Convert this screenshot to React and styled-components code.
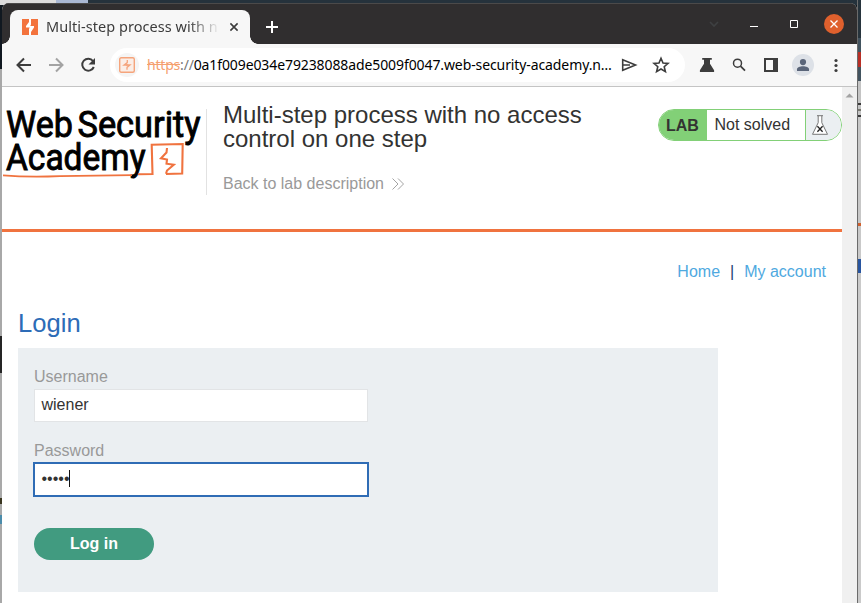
import React from "react";
import styled, { createGlobalStyle, css } from "styled-components";

const Global = createGlobalStyle`
  * { box-sizing: border-box; }
  html, body { margin: 0; padding: 0; overflow: hidden; }
  body { font-family: "Liberation Sans", Arial, sans-serif; font-size: 16px; color: #333332; }
`;

const Desktop = styled.div`
  width: 861px;
  height: 603px;
  padding: 3px 0 0 2px;
  display: grid;
  grid-template-columns: 855px 4px;
  background: linear-gradient(90deg, #dcdcdc 0 56px, #a9b8d4 56px 88px, #25323c 88px) 0 0 / 100% 5px no-repeat,
    linear-gradient(#101820 0 69px, #a8a8a8 69px 336px, #252525 336px 373px, #a9a9a9 373px 498px, #39351f 498px 504px, #aaa 504px 515px, #4b8cab 515px 524px, #a8a8a8 524px);
`;

const RightStrip = styled.div`
  margin-top: -3px;
  border-left: 1px solid #6b6b6b;
  background: linear-gradient(#27343d 0 38px, #42535f 38px 52px, #b92f26 52px 67px, #42535f 67px 81px, #c4c4c4 81px 103px, #383838 103px 105px, #c4c4c4 105px 109px, #77776f 109px 111px, #c4c4c4 111px 115px, #383838 115px 117px, #c7c7c7 117px 223px, #d0602e 223px 226px, #c9c9c9 226px 259px, #2855a0 259px 273px, #cacaca 273px);
`;

const Window = styled.div`
  height: 600px;
  display: grid;
  grid-template-rows: 41px 43px 516px;
  border-radius: 7px 7px 0 0;
  overflow: hidden;
  background: #fff;
`;

const TitleBar = styled.div`
  display: flex;
  padding: 7px 3px 0 8px;
  background: #302e2f;
  box-shadow: inset 0 1px #4b4a4a;
`;

const Tab = styled.div`
  position: relative;
  width: 240px;
  height: 34px;
  display: flex;
  align-items: center;
  padding: 0 11px 0 12px;
  border-radius: 8px 8px 0 0;
  background: #f7f7f7;
  &::before, &::after {
    content: "";
    position: absolute;
    bottom: 0;
    width: 8px;
    height: 8px;
  }
  &::before { left: -8px; background: radial-gradient(circle at 0 0, #302e2f 7.5px, #f7f7f7 8px); }
  &::after { right: -8px; background: radial-gradient(circle at 100% 0, #302e2f 7.5px, #f7f7f7 8px); }
`;

const TabTitle = styled.div`
  width: 171px;
  margin: -2px auto 0 8px;
  overflow: hidden;
  white-space: nowrap;
  font: 14.5px/22px "Noto Sans", sans-serif;
  letter-spacing: 0.04px;
  color: #3c3c3c;
  mask-image: linear-gradient(90deg, #000 142px, transparent 174px);
`;

const NewTab = styled.div`
  width: 44px;
  display: flex;
  align-items: center;
  justify-content: center;
`;

const WindowControls = styled.div`
  margin-left: auto;
  height: 28px;
  display: grid;
  grid-template-columns: repeat(4, 40px);
  align-items: center;
  justify-items: center;
  & > svg { display: block; }
`;

const CloseButton = styled.div`
  width: 20px;
  height: 20px;
  display: grid;
  place-items: center;
  border-radius: 50%;
  background: #df602d;
`;

const Toolbar = styled.div`
  display: flex;
  align-items: center;
  padding: 0 11px 1px 12px;
  border-bottom: 1px solid #c4c4c4;
  background: #f7f7f7;
`;

const NavButtons = styled.div`
  display: flex;
  width: 96px;
  gap: 12px;
`;

const AddressBar = styled.div`
  width: 575px;
  height: 34px;
  display: flex;
  align-items: center;
  padding: 0 14px 0 5px;
  border-radius: 17px;
  background: #fff;
`;

const SiteBadge = styled.div`
  width: 24px;
  height: 24px;
  display: grid;
  place-items: center;
  border-radius: 50%;
  background: #f5f5f5;
`;

const Url = styled.div`
  width: 467px;
  margin-left: 8px;
  white-space: nowrap;
  font: 14px/22px "Noto Sans", sans-serif;
  letter-spacing: -0.2px;
  color: #000;
`;

const Scheme = styled.span`
  color: #f5a06f;
  text-decoration: line-through;
`;

const Slashes = styled.span`
  color: #777;
`;

const Host = styled.span`
  letter-spacing: -0.1px;
`;

const AddressActions = styled.div`
  display: flex;
  margin-left: auto;
  gap: 12px;
`;

const Extensions = styled.div`
  margin-left: auto;
  display: flex;
  align-items: center;
  gap: 12px;
  & > svg { display: block; }
  & > svg:nth-child(4) { margin-left: -1px; }
`;

const Viewport = styled.div`
  display: grid;
  grid-template-columns: 840px 15px;
`;

const Scrollbar = styled.div`
  padding: 6px 3px;
  background: #f0f0f0;
  & > svg { display: block; }
`;

const Page = styled.div`
  min-width: 0;
`;

const LabHeader = styled.header`
  height: 145px;
  display: flex;
  align-items: flex-start;
  border-bottom: 3px solid #f0733f;
`;

const LogoCell = styled.div`
  width: 205px;
  height: 86px;
  margin-top: 22px;
  border-right: 1px solid #e2e2e2;
  & > svg { display: block; overflow: visible; }
`;

const Heading = styled.div`
  width: 400px;
  padding: 16px 0 0 16px;
`;

const LabTitle = styled.h1`
  margin: 0;
  font-size: 24px;
  font-weight: 400;
  line-height: 24px;
`;

const BackLink = styled.a`
  display: flex;
  align-items: center;
  gap: 8px;
  margin-top: 23px;
  line-height: 20px;
  color: #999;
  & > svg { margin-top: -1px; }
`;

const LabStatus = styled.div`
  width: 184px;
  height: 32px;
  display: grid;
  grid-template-columns: 48px 99px 1fr;
  align-items: stretch;
  margin: 22px 0 0 auto;
  border: 1px solid #82d077;
  border-radius: 16px;
  overflow: hidden;
  line-height: 30px;
`;

const LabTag = styled.div`
  padding: 1px 0 0 7px;
  background: #82d077;
  font-weight: 700;
`;

const LabState = styled.div`
  padding-left: 7.5px;
  border-right: 1px solid #82d077;
`;

const FlaskCell = styled.div`
  padding: 5px 0 0 5px;
  background: #ebeff2;
  & > svg { display: block; }
`;

const Links = styled.nav`
  display: flex;
  justify-content: flex-end;
  gap: 10px;
  padding: 30px 16px 0 0;
  line-height: 20px;
  color: #1b3b6f;
`;

const Link = styled.a`
  color: #4fa9df;
`;

const Main = styled.main`
  padding: 26px 0 0 16px;
`;

const SectionTitle = styled.h2`
  margin: 0;
  height: 40px;
  font-size: 25.6px;
  line-height: 30px;
  font-weight: 400;
  color: #2d6cb7;
`;

const LoginForm = styled.div`
  width: 700px;
  height: 244px;
  padding: 19px 16px;
  background: #ebeff2;
`;

const Field = styled.div`
  height: ${(p) => (p.$last ? "87px" : "74px")};
`;

const Label = styled.label`
  display: block;
  height: 22px;
  line-height: 20px;
  color: #999;
`;

const Input = styled.div`
  width: 334px;
  height: 33px;
  display: flex;
  align-items: center;
  padding: 0 6.5px 2px;
  border: 1px solid #e2e4e6;
  background: #fff;
  ${(p) => p.$focused && css`
    border-color: #2f6cb5;
    box-shadow: 0 0 0 1px #2f6cb5;
  `}
`;

const Caret = styled.span`
  width: 1px;
  height: 17px;
  margin-left: -0.5px;
  background: #111;
`;

const SubmitButton = styled.button`
  display: block;
  width: 120px;
  height: 32px;
  padding: 0;
  border: 0;
  border-radius: 16px;
  background: #419b80;
  color: #fff;
  font: 700 16px/32px "Liberation Sans", Arial, sans-serif;
`;

const stroke = { fill: "none", stroke: "#3d3d3d", strokeWidth: 2 };

function AcademyLogo() {
  return (
    <svg width="203" height="74" viewBox="2 109 203 74">
      <g fill="#000" stroke="#000" strokeWidth="0.9" fontFamily="Roboto, sans-serif" fontSize="36.5" fontWeight="400">
        <text x="6" y="137.3" textLength="67" lengthAdjust="spacingAndGlyphs">Web</text>
        <text x="77.5" y="137.3" textLength="123" lengthAdjust="spacingAndGlyphs">Security</text>
        <text x="6" y="169.6" textLength="139.5" lengthAdjust="spacingAndGlyphs">Academy</text>
      </g>
      <g fill="none" stroke="#f0733f">
        <path d="M3 175.4 Q28 177.5 60 176.2 L132 175.2" strokeWidth="1.7" />
        <path d="M138 174.3 L152.5 174 L151.7 144.8 L182.7 144 L182.2 173.5 L166 174" strokeWidth="2.1" />
        <path d="M167 148 L166.5 152.5 L161 158.3 L167 159.5 L166.5 163.7 L173.8 164.7 L167 170.5 L166 173.7" strokeWidth="2.1" />
      </g>
    </svg>
  );
}

export default function App() {
  return (
    <>
      <Global />
      <Desktop>
        <Window>
          <TitleBar>
            <Tab>
              <svg width="16" height="16" viewBox="0 0 16 16">
                <path fill="#f3733d" d="M0 0h16v16H0z" />
                <path fill="#fff" d="M7 0h2v5.5L8.3 7H12v1.5L9 13v3H7v-6l.7-1.5H4V7l3-4z" />
              </svg>
              <TabTitle>Multi-step process with no access</TabTitle>
              <svg width="10" height="10" viewBox="0 0 10 10"><path d="M1.4 1.4l7.2 7.2M8.6 1.4L1.4 8.6" {...stroke} strokeWidth="1.6" /></svg>
            </Tab>
            <NewTab>
              <svg width="12" height="12" viewBox="0 0 12 12"><path d="M6 0v12M0 6h12" stroke="#fff" strokeWidth="2" /></svg>
            </NewTab>
            <WindowControls>
              <svg width="12" height="8" viewBox="0 0 12 8"><path d="M2 2l4 4 4-4" stroke="#3e4042" strokeWidth="1.6" fill="none" /></svg>
              <svg width="8" height="6" viewBox="0 0 8 6"><path d="M0 5.5h8" stroke="#fff" /></svg>
              <svg width="8" height="8" viewBox="0 0 8 8"><path d="M.5.5h7v7h-7z" stroke="#fff" fill="none" /></svg>
              <CloseButton>
                <svg width="8" height="8" viewBox="0 0 8 8"><path d="M.5.5l7 7M7.5.5l-7 7" stroke="#fff" strokeWidth="1.3" /></svg>
              </CloseButton>
            </WindowControls>
          </TitleBar>
          <Toolbar>
            <NavButtons>
              <svg width="20" height="20" viewBox="0 0 20 20"><path d="M17 10H4M10 3.5L3.5 10l6.5 6.5" {...stroke} /></svg>
              <svg width="20" height="20" viewBox="0 0 20 20"><path d="M3 10h13M10 3.5l6.5 6.5-6.5 6.5" {...stroke} stroke="#a3a3a3" /></svg>
              <svg width="20" height="20" viewBox="0 0 20 20">
                <path d="M15 6A6 6 0 1 0 15.8 12" {...stroke} />
                <path d="M17 3v6.5h-6.5z" fill="#3d3d3d" />
              </svg>
            </NavButtons>
            <AddressBar>
              <SiteBadge>
                <svg width="16" height="16" viewBox="0 0 16 16">
                  <rect x=".7" y=".7" width="14.6" height="14.6" rx="1.5" fill="#fbeee7" stroke="#f5a47c" strokeWidth="1.4" />
                  <path d="M8.3 3v2.5L5 8h3v1.2M8 12.8v-2.3L11 8H8V6.8" fill="none" stroke="#f5a47c" strokeWidth="1.3" />
                </svg>
              </SiteBadge>
              <Url>
                <Scheme>https</Scheme><Slashes>://</Slashes><Host>0a1f009e034e79238088ade5009f0047.web-security-academy.n…</Host>
              </Url>
              <AddressActions>
                <svg width="20" height="20" viewBox="0 0 20 20"><path d="M3.7 4.8L16.5 10 3.7 15.2zM4 10h7" {...stroke} strokeWidth="1.6" /></svg>
                <svg width="20" height="20" viewBox="0 0 20 20"><path d="M10 3.3l2 4.7 5 .4-3.8 3.3 1.2 4.9-4.4-2.6-4.4 2.6 1.2-4.9L3 8.4 8 8z" {...stroke} strokeWidth="1.6" /></svg>
              </AddressActions>
            </AddressBar>
            <Extensions>
              <svg width="20" height="20" viewBox="0 0 20 20"><path fill="#3d3d3d" d="M5.2 3h9.6v1.7H13v4.1l4.1 6.5V17H2.9v-1.7L7 8.8V4.7H5.2z" /></svg>
              <svg width="20" height="20" viewBox="0 0 20 20"><circle cx="8.5" cy="8.2" r="4" {...stroke} strokeWidth="1.5" /><path d="M11.5 11.2l4.5 4.5" {...stroke} strokeWidth="1.8" /></svg>
              <svg width="20" height="20" viewBox="0 0 20 20"><path fill="#3d3d3d" fillRule="evenodd" d="M3 3h14v14H3zM5 5v10h7V5z" /></svg>
              <svg width="22" height="22" viewBox="0 0 22 22"><circle cx="11" cy="11" r="11" fill="#dde1e7" /><circle cx="11" cy="8.1" r="3.1" fill="#5a6579" /><path fill="#5a6579" d="M5 17v-1.7c0-4 12-4 12 0V17z" /></svg>
              <svg width="20" height="20" viewBox="0 0 20 20"><g fill="#3d3d3d"><circle cx="10" cy="5.5" r="1.6" /><circle cx="10" cy="10.5" r="1.6" /><circle cx="10" cy="15.5" r="1.6" /></g></svg>
            </Extensions>
          </Toolbar>
          <Viewport>
            <Page>
              <LabHeader>
                <LogoCell><AcademyLogo /></LogoCell>
                <Heading>
                  <LabTitle>Multi-step process with no access control on one step</LabTitle>
                  <BackLink>
                    Back to lab description
                    <svg width="12" height="12" viewBox="0 0 12 12"><path d="M.5.5L6 6 .5 11.5M6 .5L11.5 6 6 11.5" fill="none" stroke="#999" strokeWidth=".9" /></svg>
                  </BackLink>
                </Heading>
                <LabStatus>
                  <LabTag>LAB</LabTag>
                  <LabState>Not solved</LabState>
                  <FlaskCell>
                    <svg width="18" height="20" viewBox="0 0 18 20">
                      <path d="M6 .7h6M7.2.7v7L1.5 19.3h15L10.8 7.7v-7" fill="#fff" stroke="#777" />
                      <path d="M6.4 11.2l5.2 5.6M11.6 11.2l-5.2 5.6" stroke="#222" strokeWidth="1.3" />
                    </svg>
                  </FlaskCell>
                </LabStatus>
              </LabHeader>
              <Links><Link>Home</Link><span>|</span><Link>My account</Link></Links>
              <Main>
                <SectionTitle>Login</SectionTitle>
                <LoginForm>
                  <Field><Label>Username</Label><Input>wiener</Input></Field>
                  <Field $last><Label>Password</Label><Input $focused>•••••<Caret /></Input></Field>
                  <SubmitButton>Log in</SubmitButton>
                </LoginForm>
              </Main>
            </Page>
            <Scrollbar>
              <svg width="9" height="5" viewBox="0 0 9 5"><path fill="#a3a3a3" d="M.5 4.5L4.5.5l4 4z" /></svg>
            </Scrollbar>
          </Viewport>
        </Window>
        <RightStrip />
      </Desktop>
    </>
  );
}
